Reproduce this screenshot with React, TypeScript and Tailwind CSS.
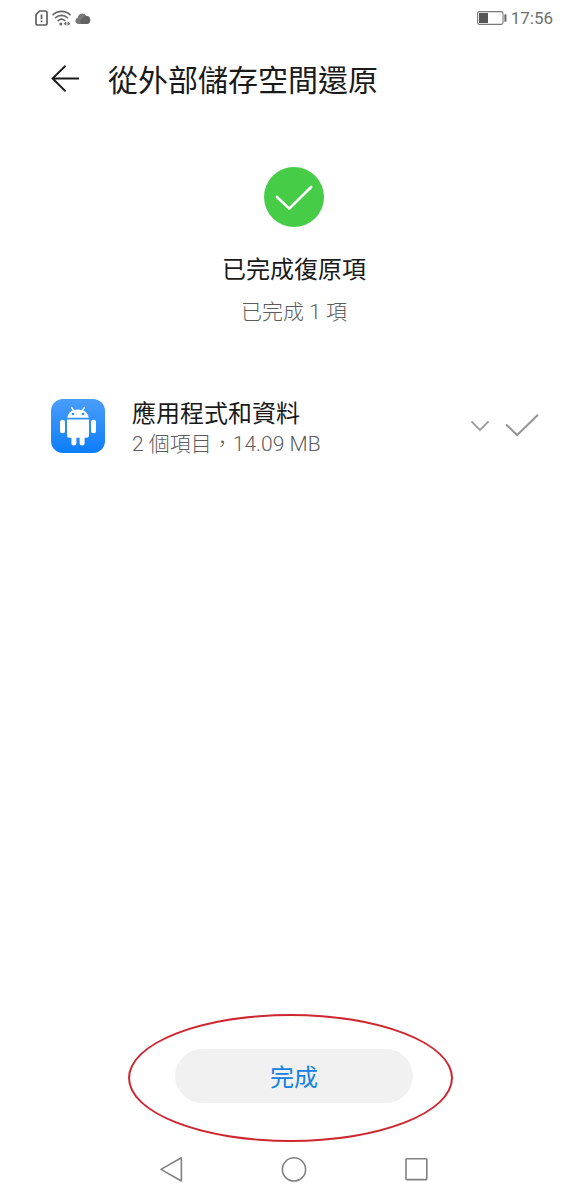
import React from 'react';

interface RestoreItem {
  id: string;
  title: string;
  detail: string;
}

const items: RestoreItem[] = [
  { id: 'apps', title: '應用程式和資料', detail: '2 個項目，14.09 MB' },
];

function StatusBar() {
  return (
    <div className="flex h-9 items-center justify-between px-[35px]">
      <div className="flex items-center gap-1">
        <svg width="13" height="16" viewBox="0 0 13 16" fill="none" stroke="#5f5f5f" strokeWidth="1.7">
          <path d="M4.6 1H10.4Q12 1 12 2.6V13.4Q12 15 10.4 15H2.6Q1 15 1 13.4V4.6Z" strokeLinejoin="round" />
          <path d="M6.5 4.6V9.2M6.5 10.6V12.2" />
        </svg>
        <svg width="19" height="16" viewBox="0 0 19 16" fill="none" stroke="#666666" strokeWidth="1.6" strokeLinecap="round">
          <path d="M1 4.8C5.6 0.2 13.4 0.2 18 4.8" />
          <path d="M3.6 7.8C6.8 4.6 12.2 4.6 15.4 7.8" />
          <path d="M6.2 10.6C8.2 8.8 10.8 8.8 12.6 10.4" />
          <circle cx="8.8" cy="14" r="1.5" fill="#666666" stroke="none" />
          <path d="M14.4 11.6L11.6 13.7L14.4 15.8ZM15.6 11.6L18.4 13.7L15.6 15.8Z" fill="#666666" stroke="none" />
        </svg>
        <svg width="16" height="11" viewBox="0 0 16 11">
          <path d="M3.4 11A3.2 3.2 0 0 1 2.8 4.7A4.6 4.6 0 0 1 11.4 2.9A4.1 4.1 0 0 1 12 11Z" fill="#777777" />
          <path d="M6.6 11A3 3 0 0 1 7.4 5.6A4 4 0 0 1 11.4 2.9A4.1 4.1 0 0 1 12 11Z" fill="#636363" />
        </svg>
      </div>
      <div className="flex items-center gap-1">
        <svg width="30" height="14" viewBox="0 0 30 14">
          <rect x="0.6" y="0.6" width="25.4" height="12.8" rx="1.8" fill="none" stroke="#777777" strokeWidth="1.1" />
          <rect x="2" y="2" width="9" height="10" fill="#555555" />
          <rect x="27.4" y="3.2" width="2" height="7.6" rx="0.6" fill="#666666" />
        </svg>
        <span className="text-[17px] leading-6 text-[#707070]">17:56</span>
      </div>
    </div>
  );
}

function AppsIcon() {
  return (
    <svg width="54" height="54" viewBox="0 0 54 54" className="shrink-0">
      <defs>
        <linearGradient id="appsFill" x1="0" y1="0" x2="0" y2="1">
          <stop offset="0" stopColor="#4a9dfa" />
          <stop offset="1" stopColor="#0c7dfb" />
        </linearGradient>
      </defs>
      <rect width="54" height="54" rx="12" fill="url(#appsFill)" />
      <g stroke="#ffffff" strokeWidth="1.4" strokeLinecap="round">
        <path d="M20.6 8.4L22.8 12" />
        <path d="M33.4 8.4L31.2 12" />
      </g>
      <g fill="#ffffff">
        <path d="M16.4 18.8C16.6 13.6 21.2 10.4 27 10.4S37.4 13.6 37.6 18.8Z" />
        <path d="M16 20.4H38V36.4Q38 38.8 35.6 38.8H18.4Q16 38.8 16 36.4Z" />
        <rect x="9" y="20.8" width="5" height="13.4" rx="2.5" />
        <rect x="40" y="20.8" width="5" height="13.4" rx="2.5" />
        <rect x="20.4" y="34" width="5" height="12.4" rx="2.5" />
        <rect x="28.6" y="34" width="5" height="12.4" rx="2.5" />
      </g>
      <circle cx="22" cy="15" r="1.3" fill="#2f8ffa" />
      <circle cx="32" cy="15" r="1.3" fill="#2f8ffa" />
    </svg>
  );
}

function RestoreRow({ item }: { item: RestoreItem }) {
  return (
    <li className="flex items-center">
      <AppsIcon />
      <div className="ml-[27px] min-w-0 flex-1 pt-1.5">
        <h3 className="text-2xl leading-[30px] text-[#1a1a1a]">{item.title}</h3>
        <p className="text-[21px] leading-[30px] font-light text-[#5c5c5c]">{item.detail}</p>
      </div>
      <button type="button" aria-label="展開" className="flex size-5 items-center justify-center">
        <svg width="20" height="12" viewBox="0 0 20 12" fill="none" stroke="#969696" strokeWidth="1.7">
          <path d="M1.4 1.4L10 10L18.6 1.4" />
        </svg>
      </button>
      <svg width="34" height="24" viewBox="0 0 34 24" fill="none" stroke="#969696" strokeWidth="2" className="ml-[15px]">
        <path d="M1 10.4L12.2 21L33 0.8" />
      </svg>
    </li>
  );
}

function NavBar() {
  return (
    <nav className="mx-auto grid h-[62px] w-5/8 grid-cols-3 place-items-center">
      <button type="button" aria-label="返回">
        <svg width="24" height="26" viewBox="0 0 24 26" fill="none" stroke="#808080" strokeWidth="1.6" strokeLinejoin="round">
          <path d="M21.4 1.8V25L1 13.4Z" />
        </svg>
      </button>
      <button type="button" aria-label="主畫面">
        <svg width="26" height="26" viewBox="0 0 26 26" fill="none" stroke="#808080" strokeWidth="1.6">
          <circle cx="13" cy="13.4" r="11.6" />
        </svg>
      </button>
      <button type="button" aria-label="最近使用">
        <svg width="24" height="24" viewBox="0 0 24 24" fill="none" stroke="#808080" strokeWidth="1.6">
          <rect x="1" y="1.8" width="20.8" height="20.8" rx="0.8" />
        </svg>
      </button>
    </nav>
  );
}

export default function App() {
  return (
    <div className="flex min-h-screen flex-col bg-white font-[Roboto,'Noto_Sans_CJK_TC',sans-serif]">
      <StatusBar />

      <header className="flex h-[86px] items-center gap-[29px] px-[51px]">
        <button type="button" aria-label="返回">
          <svg width="28" height="28" viewBox="0 0 28 28" fill="none" stroke="#1a1a1a" strokeWidth="2">
            <path d="M14.6 0.8L1.6 13.4L14.6 26.4M1.6 13.4H28" />
          </svg>
        </button>
        <h1 className="pt-1 text-[30px] leading-10 text-[#1a1a1a]">從外部儲存空間還原</h1>
      </header>

      <main className="flex flex-1 flex-col">
        <section className="flex flex-col items-center pt-[45px]">
          <svg width="60" height="60" viewBox="0 0 60 60" fill="none">
            <circle cx="30" cy="30" r="30" fill="#47cc47" />
            <path d="M13 30L25.2 41.6L47.2 20" stroke="#ffffff" strokeWidth="2.6" strokeLinecap="round" strokeLinejoin="round" />
          </svg>
          <h2 className="mt-[27px] text-2xl leading-8 text-[#1a1a1a]">已完成復原項</h2>
          <p className="mt-2.5 text-[21px] leading-8 font-light text-[#5c5c5c]">已完成 1 項</p>
        </section>

        <ul className="mt-[65px] pr-[49px] pl-[51px]">
          {items.map((item) => (
            <RestoreRow key={item.id} item={item} />
          ))}
        </ul>

        <div className="mt-auto mb-[35px] flex justify-center">
          <div className="relative">
            <button type="button" className="h-[54px] w-[238px] rounded-full bg-[#f1f1f1] pt-1 text-2xl text-[#1380e2]">
              完成
            </button>
            {/* red marker ring around the button */}
            <div className="pointer-events-none absolute -top-[35px] -right-10 -bottom-[39px] -left-[47px] rounded-[50%] border-2 border-[#cf2730]" />
          </div>
        </div>
      </main>

      <NavBar />
    </div>
  );
}
